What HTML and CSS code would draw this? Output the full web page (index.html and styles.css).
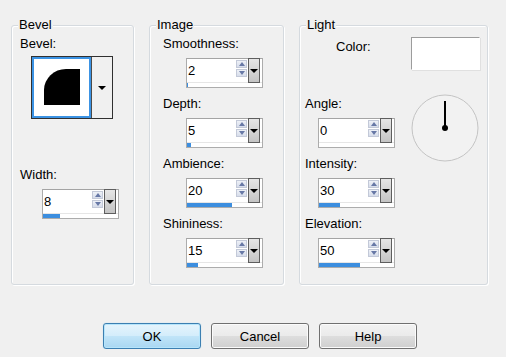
FILE: index.html
```html
<!DOCTYPE html>
<html lang="en">
<head>
    <meta charset="UTF-8">
    <title>Inner Bevel</title>
    <link rel="stylesheet" href="styles.css">
</head>
<body>
    <div class="groups">
        <!-- Bevel -->
        <div class="group group-bevel">
            <span class="legend">Bevel</span>
            <div class="label">Bevel:</div>
            <div class="bevel-pick">
                <div class="bevel-swatch"><div class="bevel-shape"></div></div>
                <div class="bevel-drop"><i class="tri-down"></i></div>
            </div>
            <div class="field field-width">
                <div class="label">Width:</div>
                <div class="spin">
                    <div class="spin-main">
                        <span class="spin-value">8</span>
                        <span class="spin-arrows"><i class="arr-up"></i><i class="arr-down"></i></span>
                        <span class="spin-drop"><i class="tri-down"></i></span>
                    </div>
                    <div class="spin-track"><div class="spin-fill" style="width:17px"></div></div>
                </div>
            </div>
        </div>

        <!-- Image -->
        <div class="group group-image">
            <span class="legend">Image</span>
            <div class="field">
                <div class="label">Smoothness:</div>
                <div class="spin">
                    <div class="spin-main">
                        <span class="spin-value">2</span>
                        <span class="spin-arrows"><i class="arr-up"></i><i class="arr-down"></i></span>
                        <span class="spin-drop"><i class="tri-down"></i></span>
                    </div>
                    <div class="spin-track"><div class="spin-fill" style="width:1px"></div></div>
                </div>
            </div>
            <div class="field">
                <div class="label">Depth:</div>
                <div class="spin">
                    <div class="spin-main">
                        <span class="spin-value">5</span>
                        <span class="spin-arrows"><i class="arr-up"></i><i class="arr-down"></i></span>
                        <span class="spin-drop"><i class="tri-down"></i></span>
                    </div>
                    <div class="spin-track"><div class="spin-fill" style="width:4px"></div></div>
                </div>
            </div>
            <div class="field">
                <div class="label">Ambience:</div>
                <div class="spin">
                    <div class="spin-main">
                        <span class="spin-value">20</span>
                        <span class="spin-arrows"><i class="arr-up"></i><i class="arr-down"></i></span>
                        <span class="spin-drop"><i class="tri-down"></i></span>
                    </div>
                    <div class="spin-track"><div class="spin-fill" style="width:45px"></div></div>
                </div>
            </div>
            <div class="field">
                <div class="label">Shininess:</div>
                <div class="spin">
                    <div class="spin-main">
                        <span class="spin-value">15</span>
                        <span class="spin-arrows"><i class="arr-up"></i><i class="arr-down"></i></span>
                        <span class="spin-drop"><i class="tri-down"></i></span>
                    </div>
                    <div class="spin-track"><div class="spin-fill" style="width:11px"></div></div>
                </div>
            </div>
        </div>

        <!-- Light -->
        <div class="group group-light">
            <span class="legend">Light</span>
            <div class="color-row">
                <div class="label color-label">Color:</div>
                <div class="color-swatch"></div>
            </div>
            <div class="light-row">
                <div class="light-fields">
                    <div class="field">
                        <div class="label">Angle:</div>
                        <div class="spin">
                            <div class="spin-main">
                                <span class="spin-value">0</span>
                                <span class="spin-arrows"><i class="arr-up"></i><i class="arr-down"></i></span>
                                <span class="spin-drop"><i class="tri-down"></i></span>
                            </div>
                            <div class="spin-track"><div class="spin-fill" style="width:0px"></div></div>
                        </div>
                    </div>
                    <div class="field">
                        <div class="label">Intensity:</div>
                        <div class="spin">
                            <div class="spin-main">
                                <span class="spin-value">30</span>
                                <span class="spin-arrows"><i class="arr-up"></i><i class="arr-down"></i></span>
                                <span class="spin-drop"><i class="tri-down"></i></span>
                            </div>
                            <div class="spin-track"><div class="spin-fill" style="width:21px"></div></div>
                        </div>
                    </div>
                    <div class="field">
                        <div class="label">Elevation:</div>
                        <div class="spin">
                            <div class="spin-main">
                                <span class="spin-value">50</span>
                                <span class="spin-arrows"><i class="arr-up"></i><i class="arr-down"></i></span>
                                <span class="spin-drop"><i class="tri-down"></i></span>
                            </div>
                            <div class="spin-track"><div class="spin-fill" style="width:41px"></div></div>
                        </div>
                    </div>
                </div>
                <svg class="dial" width="68" height="68" viewBox="0 0 68 68">
                    <circle cx="34" cy="34" r="33" fill="#f2f2f2" stroke="#c4c4c4" stroke-width="1"/>
                    <line x1="34" y1="7" x2="34" y2="33" stroke="#000" stroke-width="2"/>
                    <circle cx="34" cy="34" r="3" fill="#000"/>
                </svg>
            </div>
        </div>
    </div>

    <div class="buttons">
        <button class="btn btn-default">OK</button>
        <button class="btn">Cancel</button>
        <button class="btn">Help</button>
    </div>
</body>
</html>
```

FILE: styles.css
```css
body {
    margin: 0;
    background: #f0f0f0;
    color: #000;
    font-family: "Liberation Sans", Arial, sans-serif;
    font-size: 13px;
    line-height: 15px;
}
.groups {
    display: flex;
    gap: 15px;
    padding: 25px 0 0 11px;
}
.group {
    position: relative;
    box-sizing: border-box;
    height: 260px;
    border: 1px solid #d5dadf;
    border-radius: 3px;
    box-shadow: inset 1px 1px 0 #fff, 1px 1px 0 #fff;
    padding-top: 10px;
}
.group-bevel {
    width: 123px;
    padding-left: 8px;
}
.group-image {
    width: 135px;
    padding-left: 13px;
}
.group-light {
    width: 189px;
    padding-left: 5px;
    padding-right: 7px;
}
.legend {
    position: absolute;
    top: -9px;
    left: 6px;
    padding: 0 1px;
    background: #f0f0f0;
}
.label {
    height: 15px;
    white-space: nowrap;
}

/* fields: label + spin box, 60px pitch */
.field {
    margin-bottom: 8px;
}
.field .spin {
    margin-top: 7px;
    margin-left: 23px;
}
.group-bevel .field-width {
    margin-top: 48px;
}
.group-bevel .field .spin {
    margin-left: 22px;
}
.group-light .field .spin {
    margin-left: 13px;
}

/* spin box */
.spin {
    box-sizing: border-box;
    width: 77px;
    height: 30px;
    border: 1px solid #acacac;
    border-top-color: #a4a4a4;
    background: #fff;
    display: flex;
    flex-direction: column;
}
.spin-main {
    display: flex;
    height: 24px;
    margin-top: -1px;
}
.spin-value {
    flex: 1;
    padding: 5px 0 0 1px;
}
.spin-arrows {
    width: 11px;
    display: flex;
    flex-direction: column;
    gap: 1px;
    padding-top: 2px;
    margin-right: 1px;
}
.spin-arrows i {
    position: relative;
    box-sizing: border-box;
    height: 8px;
    background: linear-gradient(#eef1f7, #d6dcea);
    border: 1px solid #c3c9d8;
}
.arr-up::after, .arr-down::after {
    content: "";
    position: absolute;
    left: 2px;
    top: 1px;
    border-left: 3px solid transparent;
    border-right: 3px solid transparent;
}
.arr-up::after {
    border-bottom: 4px solid #6778a6;
}
.arr-down::after {
    border-top: 4px solid #6778a6;
}
.spin-drop {
    position: relative;
    box-sizing: border-box;
    width: 12px;
    height: 25px;
    border: 1px solid #5e5e5e;
    background: linear-gradient(#e6e6e6, #c4c4c4);
    margin-right: 2px;
}
.tri-down {
    position: absolute;
    left: 50%;
    top: 50%;
    margin: -2px 0 0 -4px;
    border-left: 4px solid transparent;
    border-right: 4px solid transparent;
    border-top: 4px solid #000;
}
.spin-track {
    flex: 1;
    border-top: 1px solid #e6e6e6;
}
.spin-fill {
    height: 4px;
    background: #3c8edf;
}

/* bevel picker */
.bevel-pick {
    display: flex;
    width: 82px;
    height: 63px;
    box-sizing: border-box;
    border: 1px solid #303030;
    margin: 5px 0 0 11px;
}
.bevel-swatch {
    box-sizing: border-box;
    width: 59px;
    height: 61px;
    border: 2px solid #3b93e4;
    background: #fff;
    padding: 10px 0 0 10px;
}
.bevel-shape {
    width: 36px;
    height: 36px;
    background: #000;
    border-top-left-radius: 22px 21px;
}
.bevel-drop {
    position: relative;
    flex: 1;
    border-left: 1px solid #4a4a4a;
    background: #f0f0f0;
}

/* light group */
.color-row {
    display: flex;
    align-items: flex-start;
}
.color-label {
    margin: 3px 0 0 31px;
}
.color-swatch {
    box-sizing: border-box;
    width: 69px;
    height: 33px;
    margin: 1px 0 0 auto;
    background: #fff;
    border: 1px solid #fff;
    border-top-color: #9c9c9c;
    border-left-color: #9c9c9c;
    box-shadow: 1px 1px 0 #e0e0e0;
}
.light-row {
    display: flex;
    align-items: flex-start;
    margin-top: 26px;
}
.dial {
    margin: -2px 1px 0 auto;
}

/* dialog buttons */
.buttons {
    display: flex;
    gap: 10px;
    padding: 38px 0 0 103px;
}
.btn {
    box-sizing: border-box;
    width: 98px;
    height: 26px;
    font: inherit;
    color: #000;
    border: 1px solid #707070;
    border-radius: 3px;
    background: linear-gradient(#f2f2f2 0%, #ebebeb 48%, #dddddd 52%, #cfcfcf 100%);
    box-shadow: inset 0 0 0 1px #fbfbfb;
}
.btn-default {
    border-color: #3c7fb1;
    background: linear-gradient(#e5f4fc 0%, #d4edfb 48%, #c0e4f8 52%, #a9d7f2 100%);
    box-shadow: inset 0 0 0 1px #b6e5fb, 0 0 1px #8fd0f0;
}
```
